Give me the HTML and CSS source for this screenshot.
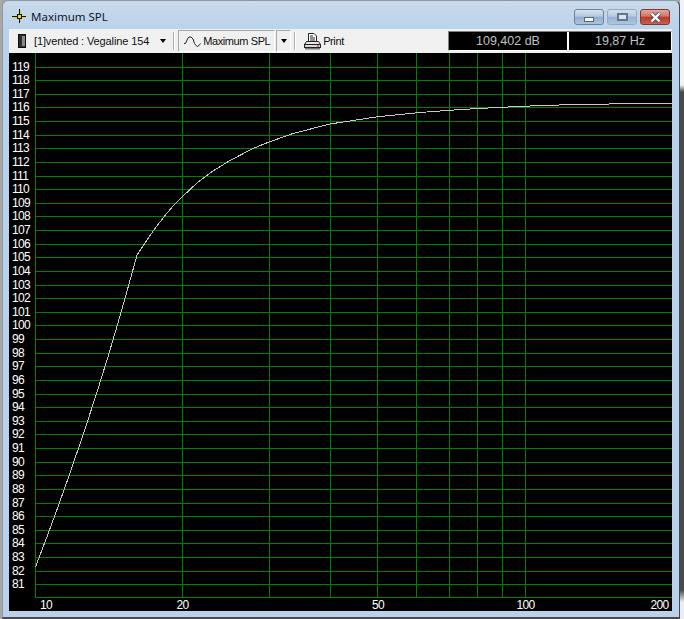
FILE: index.html
```html
<!DOCTYPE html>
<html>
<head>
    <title>Maximum SPL</title>
    <link rel="stylesheet" href="styles.css">
</head>
<body>
    <div class="window">
        <div class="titlebar">
            <svg class="title-icon" width="14" height="14" viewBox="0 0 14 14">
                <path d="M8.5 1V5M8.5 9V13M1 8.5H5M9 8.5H13" stroke="#e8c820" fill="none"/>
                <path d="M7.5 0V14M0 7.5H14" stroke="#111" fill="none"/>
                <rect x="5.5" y="5.5" width="4" height="4" fill="#f0d830" stroke="#111"/>
            </svg>
            <span class="title-text">Maximum SPL</span>
            <div class="caption-buttons">
                <div class="cap-btn cap-min"><span class="glyph-min"></span></div>
                <div class="cap-btn cap-max"><span class="glyph-max"></span></div>
                <div class="cap-btn cap-close">
                    <svg width="13" height="11" viewBox="0 0 13 11">
                        <path d="M2.5 1.5L10.5 9.5M10.5 1.5L2.5 9.5" stroke="#4a5058" stroke-width="4" fill="none"/>
                        <path d="M2.5 1.5L10.5 9.5M10.5 1.5L2.5 9.5" stroke="#fff" stroke-width="2.4" fill="none"/>
                    </svg>
                </div>
            </div>
        </div>

        <div class="toolbar">
            <svg class="device-icon" width="8" height="14" viewBox="0 0 8 14">
                <rect x="0.5" y="0.5" width="7" height="13" fill="#2c2c2c" stroke="#111"/>
                <rect x="4" y="2" width="3" height="10" fill="#8a8a8a"/>
            </svg>
            <span class="source-name">[1]vented : Vegaline 154</span>
            <span class="arrow source-arrow"></span>
            <span class="sep"></span>
            <div class="tool-btn graph-btn">
                <svg width="17" height="11" viewBox="0 0 17 11">
                    <path d="M0 7.5H1.5L3.5 3L5 1H7L9 3L10.5 7.5L12 9.5L13.5 10.5L15 9.5L16.5 7.5" stroke="#222" fill="none"/>
                </svg>
                <span class="graph-label">Maximum SPL</span>
            </div>
            <div class="tool-btn drop-btn"><span class="arrow"></span></div>
            <span class="sep sep-two"></span>
            <svg class="print-icon" width="17" height="17" viewBox="0 0 17 17">
                <path d="M4.5 .5H10L12.5 3V9.5H4.5Z" fill="#fff" stroke="#222"/>
                <path d="M6 3H9M6 5H11M6 7H11" stroke="#222"/>
                <path d="M2.5 8.5H14.5L16.5 11.5H.5Z" fill="#e8e8e8" stroke="#222"/>
                <rect x=".5" y="11.5" width="16" height="3" fill="#d8d8d8" stroke="#222"/>
                <rect x="1" y="15" width="15" height="1.5" fill="#777"/>
                <rect x="13" y="12.5" width="2" height="1" fill="#d02020"/>
            </svg>
            <span class="print-text">Print</span>
            <div class="readouts">
                <div class="readout readout-spl">109,402 dB</div>
                <div class="readout readout-freq">19,87 Hz</div>
            </div>
        </div>

        <svg class="chart" width="663" height="558" viewBox="9 53 663 558">
            <rect x="9" y="53" width="663" height="558" fill="#000"/>
            <path class="grid" d="M35.5 53V597.5M182.5 53V597.5M269.5 53V597.5M330.5 53V597.5M377.5 53V597.5M416.5 53V597.5M449.5 53V597.5M477.5 53V597.5M502.5 53V597.5M525.5 53V597.5M672.5 53V597.5
                M35 67.5H672M35 80.5H672M35 94.5H672M35 107.5H672M35 121.5H672M35 135.5H672M35 148.5H672M35 162.5H672M35 176.5H672M35 189.5H672
                M35 203.5H672M35 216.5H672M35 230.5H672M35 244.5H672M35 257.5H672M35 271.5H672M35 285.5H672M35 298.5H672M35 312.5H672M35 325.5H672
                M35 339.5H672M35 353.5H672M35 366.5H672M35 380.5H672M35 394.5H672M35 407.5H672M35 421.5H672M35 434.5H672M35 448.5H672M35 462.5H672
                M35 475.5H672M35 489.5H672M35 503.5H672M35 516.5H672M35 530.5H672M35 543.5H672M35 557.5H672M35 571.5H672M35 584.5H672M35 597.5H672"/>
            <polyline class="curve" points="35.5,567 46.9,537 57.9,507 68.6,477 78.9,447 88.9,417 98.6,387 107.9,357 116.8,327 125.4,297 133.7,267 137,255 141,249 148,238.5 155,228.5 165,215.5 173,206 182,197 197,183 213,171 230,160.5 253,148.5 269,142 293,133.5 330,124 353,120.5 377,116.8 420,112.5 449,110.3 478,108.5 525,106.2 562,104.9 620,103.8 672,103.3"/>
            <g class="y-labels">
                <text x="12" y="71">119</text><text x="12" y="84">118</text><text x="12" y="98">117</text><text x="12" y="111">116</text>
                <text x="12" y="125">115</text><text x="12" y="139">114</text><text x="12" y="152">113</text><text x="12" y="166">112</text>
                <text x="12" y="180">111</text><text x="12" y="193">110</text><text x="12" y="207">109</text><text x="12" y="220">108</text>
                <text x="12" y="234">107</text><text x="12" y="248">106</text><text x="12" y="261">105</text><text x="12" y="275">104</text>
                <text x="12" y="289">103</text><text x="12" y="302">102</text><text x="12" y="316">101</text><text x="12" y="329">100</text>
                <text x="12" y="343">99</text><text x="12" y="357">98</text><text x="12" y="370">97</text><text x="12" y="384">96</text>
                <text x="12" y="398">95</text><text x="12" y="411">94</text><text x="12" y="425">93</text><text x="12" y="438">92</text>
                <text x="12" y="452">91</text><text x="12" y="466">90</text><text x="12" y="479">89</text><text x="12" y="493">88</text>
                <text x="12" y="507">87</text><text x="12" y="520">86</text><text x="12" y="534">85</text><text x="12" y="547">84</text>
                <text x="12" y="561">83</text><text x="12" y="575">82</text><text x="12" y="588">81</text>
            </g>
            <g class="x-labels">
                <text x="46" y="609">10</text><text x="182.5" y="609">20</text><text x="378" y="609">50</text>
                <text x="525.5" y="609">100</text><text x="659.5" y="609">200</text>
            </g>
        </svg>
    </div>
</body>
</html>
```

FILE: styles.css
```css
html, body { margin: 0; height: 619px; overflow: hidden; }
body {
    background: linear-gradient(to bottom, #f2f2f2 0, #f2f2f2 85px, #4a4a4a 92px, #4a4a4a 590px, #ededed 602px) right top / 4px 100% no-repeat, #a8a8a8;
    font-family: "Liberation Sans", Arial, sans-serif;
}

.window {
    box-sizing: border-box;
    width: 678px;
    height: 619px;
    margin-left: 2px;
    padding: 0 7px 0 6px;
    display: flex;
    flex-direction: column;
    background: linear-gradient(to bottom, #c9d9ea 0, #b9d2ec 30px, #b9d1ea 100%);
    border-left: 1px solid #8a98a6;
    border-right: 1px solid #3c4a56;
    border-top: 1px solid #8a98a6;
    border-bottom: 2px solid #4a4a4a;
    border-radius: 6px 6px 0 0;
}

.titlebar { height: 28px; display: flex; align-items: center; flex-shrink: 0; }
.title-icon { margin: 2px 0 0 3px; }
.title-text { margin: 3px 0 0 5px; font-family: "Noto Sans", sans-serif; font-size: 11.5px; color: #14142c; }

.caption-buttons { margin: 8px 2px 0 auto; display: flex; gap: 3px; align-self: flex-start; }
.cap-btn {
    box-sizing: border-box;
    width: 30px;
    height: 16px;
    border: 1px solid #6f8298;
    border-radius: 3px;
    display: flex;
    align-items: center;
    justify-content: center;
    background: linear-gradient(to bottom, #d6e2ef 0, #b4c9df 45%, #8fadcc 50%, #a9c4de 100%);
}
.cap-max { border-color: #8fa3b8; opacity: .85; }
.cap-close { border-color: #7c3a34; background: linear-gradient(to bottom, #e4a79c 0, #cf7468 45%, #b8382a 50%, #c9604e 100%); }
.glyph-min { width: 8px; height: 3px; margin-top: 5px; background: #f4f6f8; border: 1px solid #56677a; }
.glyph-max { width: 7px; height: 4px; border: 2px solid #56677a; background: #dfe7ef; }

.toolbar { height: 24px; display: flex; align-items: center; flex-shrink: 0; background: #f0f0f0; font-size: 11px; color: #111; }
.device-icon { margin-left: 9px; }
.source-name { margin-left: 8px; white-space: nowrap; letter-spacing: -.12px; }
.arrow { width: 0; height: 0; border-style: solid; border-width: 4px 3.5px 0; border-color: #000 transparent transparent; }
.source-arrow { margin-left: 11px; }
.sep { width: 1px; height: 18px; margin-left: 7px; background: #b0b0b0; border-right: 1px solid #fff; }
.sep-two { margin-left: 3px; }

.tool-btn {
    box-sizing: border-box;
    height: 22px;
    display: flex;
    align-items: center;
    border: 1px solid;
    border-color: #a8a8a8 #fff #fff #a8a8a8;
    background: #f0f0f0;
}
.graph-btn { width: 97px; margin-left: 3px; padding-left: 5px; gap: 2px; }
.graph-label { white-space: nowrap; letter-spacing: -.4px; }
.drop-btn { width: 15px; margin-left: 1px; justify-content: center; }
.print-icon { margin-left: 8px; }
.print-text { margin-left: 2px; letter-spacing: -.4px; }

.readouts {
    box-sizing: border-box;
    width: 224px;
    height: 20px;
    margin-left: auto;
    display: flex;
    gap: 2px;
    background: #fff;
    border-top: 1px solid #808080;
    border-left: 1px solid #808080;
    border-right: 1px solid #fff;
    border-bottom: 1px solid #fff;
}
.readout { height: 18px; line-height: 18px; background: #000; color: #c0c0c0; text-align: center; font-size: 12.5px; }
.readout-spl { width: 118px; }
.readout-freq { width: 102px; }

.chart { display: block; flex-shrink: 0; }
.grid { stroke: #008000; stroke-width: 1; fill: none; shape-rendering: crispEdges; }
.curve { stroke: #c8c8c8; stroke-width: 1; fill: none; shape-rendering: crispEdges; }
.y-labels text, .x-labels text { fill: #fff; font-size: 12px; letter-spacing: -.7px; }
.x-labels text { text-anchor: middle; }
```
